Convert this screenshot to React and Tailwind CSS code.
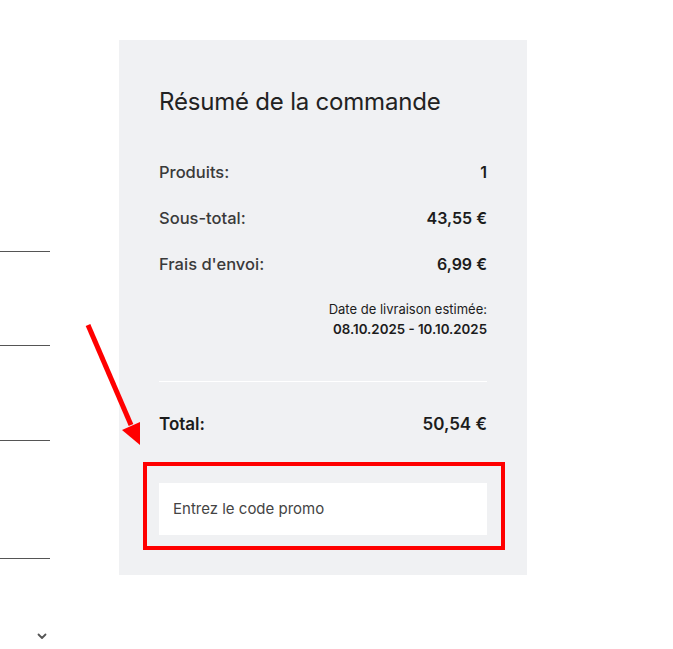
export default function App() {
  return (
    <div className="relative min-h-[649px] w-[673px] bg-white" style={{ fontFamily: "Inter, 'Noto Sans', sans-serif" }}>
      <div className="flex items-start pt-10">
        <div className="flex w-[50px] flex-col">
          <div className="mt-[211px] h-px bg-[#555]" />
          <div className="mt-[93px] h-px bg-[#555]" />
          <div className="mt-[94px] h-px bg-[#555]" />
          <div className="mt-[117px] h-px bg-[#555]" />
          <div className="mt-[74px] flex justify-end pr-[3px]">
            <svg width="10" height="7" viewBox="0 0 10 7" fill="none">
              <path d="M1.5 1.5 L5 5 L8.5 1.5" stroke="#555" strokeWidth="1.8" strokeLinecap="round" strokeLinejoin="round" />
            </svg>
          </div>
        </div>
        <div className="ml-[69px] w-[408px] bg-[#f0f1f3] px-10 pt-[48px] pb-10">
          <h2 className="text-[24px] leading-[28px] font-normal tracking-[-0.2px] text-[#222]">Résumé de la commande</h2>
          <div className="mt-[44px] flex flex-col gap-[22px] text-[16.5px] leading-[24px]">
            <div className="flex justify-between">
              <span className="font-medium text-[#3a3a3a]">Produits:</span>
              <span className="text-[16px] font-semibold text-[#1c1c1c]">1</span>
            </div>
            <div className="flex justify-between">
              <span className="font-medium text-[#3a3a3a]">Sous-total:</span>
              <span className="text-[16px] font-semibold text-[#1c1c1c]">43,55 €</span>
            </div>
            <div className="flex justify-between">
              <span className="font-medium text-[#3a3a3a]">Frais d'envoi:</span>
              <span className="text-[16px] font-semibold text-[#1c1c1c]">6,99 €</span>
            </div>
          </div>
          <div className="mt-[23px] flex flex-col items-end text-[13px] leading-[20px] text-[#1c1c1c]">
            <span>Date de livraison estimée:</span>
            <span className="text-[13.3px] font-semibold">08.10.2025 - 10.10.2025</span>
          </div>
          <div className="mt-[42px] h-px bg-white" />
          <div className="mt-[30px] flex justify-between text-[17px] leading-[24px] font-semibold text-[#1c1c1c]">
            <span>Total:</span>
            <span>50,54 €</span>
          </div>
          <div className="relative mt-[47px]">
            <div className="flex h-[52px] items-center bg-white px-[14px] text-[15px] text-[#444]">Entrez le code promo</div>
            <div className="pointer-events-none absolute -top-[21px] -bottom-[15px] -left-[16px] -right-[18px] border-4 border-[#ff0000]" />
          </div>
        </div>
      </div>
      <svg className="pointer-events-none absolute left-0 top-0" width="673" height="649">
        <line x1="88" y1="325" x2="131" y2="425" stroke="#ff0000" strokeWidth="5" />
        <polygon points="122,430 140,445 140,422" fill="#ff0000" />
      </svg>
    </div>
  );
}
